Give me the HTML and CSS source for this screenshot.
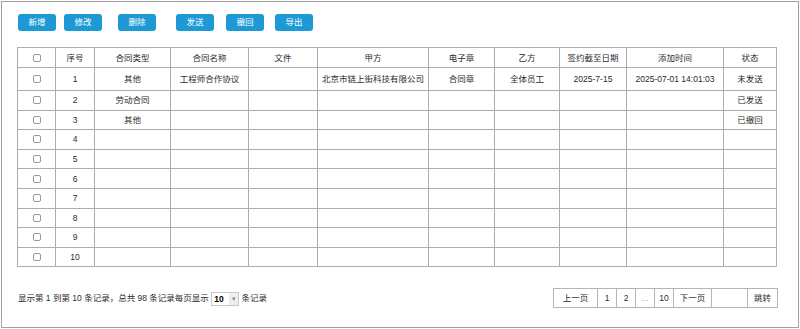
FILE: index.html
```html
<!DOCTYPE html>
<html lang="zh-CN">
<head>
    <meta charset="UTF-8">
    <meta name="viewport" content="width=device-width, initial-scale=1.0">
    <link rel="stylesheet" href="styles.css">
    <title>合同列表</title>
</head>
<body>
    <div class="panel">
        <!-- 工具栏 -->
        <div class="toolbar">
            <button class="btn">新增</button>
            <button class="btn">修改</button>
            <button class="btn">删除</button>
            <button class="btn">发送</button>
            <button class="btn">撤回</button>
            <button class="btn">导出</button>
        </div>
        <!-- 列表 -->
        <table class="grid">
            <colgroup>
                <col style="width:38px"><col style="width:39px"><col style="width:76px"><col style="width:78px">
                <col style="width:69px"><col style="width:111px"><col style="width:66px"><col style="width:65px">
                <col style="width:67px"><col style="width:97px"><col style="width:53px">
            </colgroup>
            <thead>
                <tr>
                    <th><input type="checkbox" class="chk"></th>
                    <th>序号</th>
                    <th>合同类型</th>
                    <th>合同名称</th>
                    <th>文件</th>
                    <th>甲方</th>
                    <th>电子章</th>
                    <th>乙方</th>
                    <th>签约截至日期</th>
                    <th>添加时间</th>
                    <th>状态</th>
                </tr>
            </thead>
            <tbody id="rows"></tbody>
        </table>
        <!-- 分页 -->
        <div class="footer">
            <div class="info">显示第 1 到第 10 条记录，总共 98 条记录每页显示 <span class="pagesize"><span class="pagesize-val">10</span><span class="pagesize-arrow">▾</span></span> 条记录</div>
            <div class="pager">
                <span class="pg pg-wide">上一页</span>
                <span class="pg">1</span>
                <span class="pg">2</span>
                <span class="pg pg-dots">...</span>
                <span class="pg">10</span>
                <span class="pg pg-next">下一页</span>
                <span class="pg pg-input"></span>
                <span class="pg pg-go">跳转</span>
            </div>
        </div>
    </div>
    <script>
        var data = [
            ['其他', '工程师合作协议', '', '北京市链上街科技有限公司', '合同章', '全体员工', '2025-7-15', '2025-07-01 14:01:03', '未发送'],
            ['劳动合同', '', '', '', '', '', '', '', '已发送'],
            ['其他', '', '', '', '', '', '', '', '已撤回']
        ];
        var tbody = document.getElementById('rows');
        for (var i = 0; i < 10; i++) {
            var row = data[i] || ['', '', '', '', '', '', '', '', ''];
            var tr = document.createElement('tr');
            if (i === 0) tr.className = 'first';
            var html = '<td><input type="checkbox" class="chk"></td><td>' + (i + 1) + '</td>';
            for (var j = 0; j < row.length; j++) {
                html += '<td>' + row[j] + '</td>';
            }
            tr.innerHTML = html;
            tbody.appendChild(tr);
        }
    </script>
</body>
</html>
```

FILE: styles.css
```css
:root {
    --text: #2b2b2b;
    --line: #adadad;
    --btn-bg: #1d9ad6;
    --panel-border: #a0a0a0;
}
body {
    margin: 1px;
    font-family: "Liberation Sans", "Noto Sans CJK SC", sans-serif;
    font-size: 8.5px;
    color: var(--text);
    background: #fff;
}
.panel {
    box-sizing: border-box;
    width: 798px;
    height: 327px;
    border: 1px solid var(--panel-border);
    padding: 12px 21px 0 15px;
}
.toolbar {
    display: flex;
    gap: 8px;
    padding-left: 1px;
}
.btn {
    width: 38px;
    height: 17px;
    border: none;
    border-radius: 3px;
    background-color: var(--btn-bg);
    color: #fff;
    font-family: inherit;
    font-size: 8.5px;
    line-height: 17px;
    padding: 0;
    cursor: pointer;
}
.btn:nth-child(3) {
    margin-left: 8px;
}
.btn:nth-child(4) {
    margin-left: 12px;
}
.btn:nth-child(5) {
    margin-left: 4px;
}
.btn:nth-child(6) {
    margin-left: 3px;
}
.grid {
    margin-top: 16px;
    width: 760px;
    table-layout: fixed;
    border-collapse: collapse;
}
.grid th,
.grid td {
    border: 1px solid var(--line);
    padding: 0 2px;
    height: 18.6px;
    text-align: center;
    font-weight: normal;
    line-height: 12px;
    white-space: nowrap;
    overflow: hidden;
}
.grid th {
    height: 19px;
}
.grid tr.first td {
    height: 22px;
}
.chk {
    appearance: none;
    -webkit-appearance: none;
    display: block;
    margin: 0 auto;
    width: 8px;
    height: 8px;
    border: 1px solid #999;
    border-radius: 2px;
    background: #fff;
}
.footer {
    display: flex;
    justify-content: space-between;
    align-items: center;
    margin-top: 21px;
}
.info {
    padding-left: 1px;
    white-space: nowrap;
}
.pagesize {
    display: inline-flex;
    vertical-align: middle;
    align-items: center;
    height: 14px;
    width: 28px;
    border: 1px solid #c8c8c8;
    box-sizing: border-box;
}
.pagesize-val {
    flex: 1;
    padding-left: 2px;
    color: #000;
    font-weight: bold;
}
.pagesize-arrow {
    width: 9px;
    height: 12px;
    line-height: 12px;
    text-align: center;
    background: #eee;
    color: #888;
    font-size: 7px;
}
.pager {
    display: flex;
    margin-right: -1px;
}
.pg {
    box-sizing: border-box;
    height: 20px;
    width: 20px;
    line-height: 18px;
    text-align: center;
    border: 1px solid #b5b5b5;
    margin-left: -1px;
    background: #fff;
}
.pg-wide {
    width: 45px;
}
.pg-dots {
    color: #aaa;
}
.pg-next {
    width: 39px;
}
.pg-input {
    width: 37px;
}
.pg-go {
    width: 31px;
}
```
